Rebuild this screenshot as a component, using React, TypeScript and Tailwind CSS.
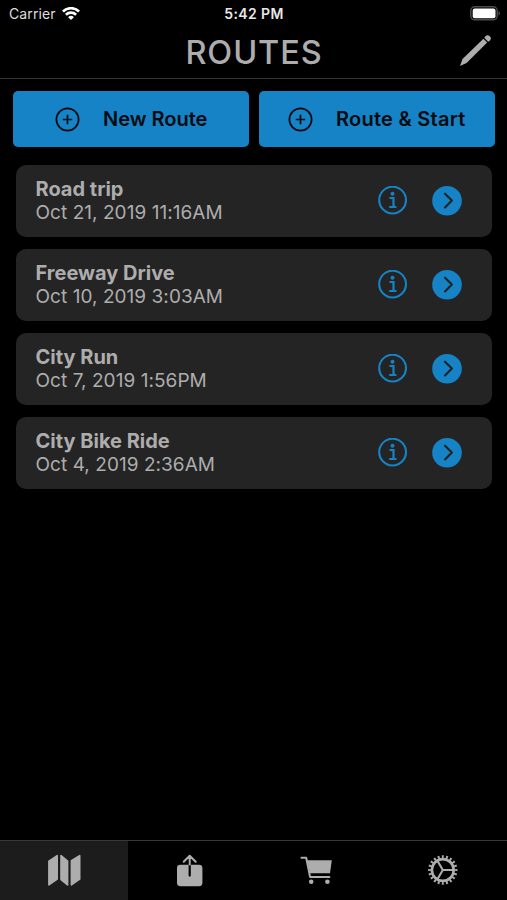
import clsx from "clsx";

const routes = [
  { name: "Road trip", date: "Oct 21, 2019 11:16AM" },
  { name: "Freeway Drive", date: "Oct 10, 2019 3:03AM" },
  { name: "City Run", date: "Oct 7, 2019 1:56PM" },
  { name: "City Bike Ride", date: "Oct 4, 2019 2:36AM" },
];

function WifiIcon() {
  return (
    <svg className="h-[14px] w-[18px]" viewBox="0 0 18 14" fill="none" stroke="#fff" strokeWidth="2.6">
      <path d="M.9 4.5a11.5 11.5 0 0 1 16.2 0" />
      <path d="M3.9 7.7a7.3 7.3 0 0 1 10.2 0" />
      <path d="M9 13.1 6.1 10.2a4.1 4.1 0 0 1 5.8 0z" fill="#fff" stroke="none" />
    </svg>
  );
}

function BatteryIcon() {
  return (
    <svg className="h-[15px] w-[31px]" viewBox="0 0 31 15">
      <rect x=".8" y=".8" width="26.4" height="13" rx="4" fill="none" stroke="#4c4c4c" strokeWidth="1.5" />
      <rect x="2.7" y="2.5" width="22.8" height="9.7" rx="2" fill="#fff" />
      <path d="M28.5 5.2c2 .7 2 3.6 0 4.4z" fill="#4c4c4c" />
    </svg>
  );
}

function PencilIcon() {
  return (
    <svg className="h-8 w-8" viewBox="0 0 32 32" fill="#adadad">
      <path d="M0 31.1 2.5 24.1 23.4 3.7 27.2 7.5 6.6 27.9z" />
      <path d="M24.3 2.8 25.4 1.3a3 3 0 0 1 4.4 4.4L28.1 6.7z" />
    </svg>
  );
}

function PlusCircleIcon() {
  return (
    <svg className="h-[25px] w-[25px] shrink-0" viewBox="0 0 25 25" fill="none" stroke="#050b10" strokeWidth="1.7">
      <circle cx="12.5" cy="12.5" r="11.1" />
      <path d="M12.5 7.8v9.4M7.8 12.5h9.4" />
    </svg>
  );
}

function InfoIcon() {
  return (
    <svg className="h-[30px] w-[30px]" viewBox="0 0 30 30" fill="none" stroke="#1583c5">
      <circle cx="14.6" cy="14.1" r="13.4" strokeWidth="2.1" />
      <circle cx="14.5" cy="7.8" r="2" fill="#1583c5" stroke="none" />
      <path d="M11.5 12h4v9.2M11.2 21h7.2" strokeWidth="2.2" />
    </svg>
  );
}

function GoIcon() {
  return (
    <svg className="h-[30px] w-[30px]" viewBox="0 0 30 30">
      <circle cx="15" cy="14.8" r="14.8" fill="#1583c5" />
      <path d="m13 7.7 6.9 6.9-6.9 6.9" fill="none" stroke="#222" strokeWidth="2.1" strokeLinecap="round" strokeLinejoin="round" />
    </svg>
  );
}

function MapIcon() {
  return (
    <svg className="h-[34px] w-[34px]" viewBox="0 0 34 34" fill="#adadad" stroke="#adadad" strokeWidth="1.6" strokeLinejoin="round">
      <path d="M1.9 7.2 10.2 1.6v23.6L1.9 30.9z" />
      <path d="M14 1.6 20.6 7v23.9L14 25.6z" />
      <path d="M24.4 6.7 32.7 1.6v23.6l-8.3 5.6z" />
    </svg>
  );
}

function ShareIcon() {
  return (
    <svg className="h-[34px] w-[34px]" viewBox="0 0 34 34" fill="none" stroke="#adadad" strokeWidth="2" strokeLinecap="round" strokeLinejoin="round">
      <rect x="3" y="10.8" width="25.4" height="21.4" rx="3.4" fill="#adadad" stroke="none" />
      <path d="M15.7 11v10.6" stroke="#000" strokeWidth="2.2" />
      <path d="M15.7 10.4V1.8M9.7 7.8l6-6 6 6" />
    </svg>
  );
}

function CartIcon() {
  return (
    <svg className="h-[34px] w-[34px]" viewBox="0 0 34 34" fill="none" stroke="#adadad" strokeWidth="2" strokeLinejoin="round">
      <path d="M1.4 3.8h4.8l3.9 19.2h19.3" strokeLinecap="round" />
      <path d="M7.2 6.2h24.6l-1.8 13H10z" fill="#adadad" stroke="none" />
      <circle cx="11.2" cy="27.8" r="2.3" fill="#adadad" stroke="none" />
      <circle cx="27.4" cy="27.8" r="2.3" fill="#adadad" stroke="none" />
    </svg>
  );
}

function GearIcon() {
  return (
    <svg className="h-[34px] w-[34px]" viewBox="0 0 34 34" fill="none" stroke="#adadad">
      <circle cx="15.8" cy="16" r="10.9" strokeWidth="2.6" />
      <circle cx="15.8" cy="16" r="13.2" strokeWidth="3" pathLength="200" strokeDasharray="4.6 5.4" strokeDashoffset="2.3" />
      <path d="M15.8 16h11M15.8 16l-5.5-9.5M15.8 16l-5.5 9.5" strokeWidth="2.1" />
    </svg>
  );
}

const tabs = [
  { name: "Routes", icon: <MapIcon />, active: true },
  { name: "Share", icon: <ShareIcon />, active: false },
  { name: "Store", icon: <CartIcon />, active: false },
  { name: "Settings", icon: <GearIcon />, active: false },
];

export default function App() {
  return (
    <div className="flex h-[900px] w-[507px] flex-col overflow-hidden bg-black font-['Inter',sans-serif] text-[#adadad]">
      <div className="grid h-[27px] shrink-0 grid-cols-3 items-center pr-[6px] pl-[7px] text-white">
        <div className="flex items-center gap-[6px] pl-[2px]">
          <span className="text-[14px] tracking-[0.1px] text-[#dedede]">Carrier</span>
          <WifiIcon />
        </div>
        <span className="text-center text-[14px] font-semibold tracking-[0.4px] text-[#e8e8e8]">5:42 PM</span>
        <div className="flex justify-end">
          <BatteryIcon />
        </div>
      </div>

      <header className="grid h-[52px] shrink-0 grid-cols-[1fr_auto_1fr] items-center border-b border-[#333] pr-[15px] pl-4">
        <h1 className="col-start-2 pt-[2px] text-[32.5px] leading-none font-medium tracking-[0.9px]">ROUTES</h1>
        <button className="flex justify-end pb-[3px]" aria-label="Edit">
          <PencilIcon />
        </button>
      </header>

      <main className="flex-1">
        <div className="grid grid-cols-2 gap-[10px] pt-3 pr-3 pl-[13px]">
          <button className="flex h-[56px] items-center rounded-[5px] bg-[#1583c5] pl-[42px] text-[20px] font-semibold text-[#050b10]">
            <PlusCircleIcon />
            <span className="ml-[23px] whitespace-nowrap">New Route</span>
          </button>
          <button className="flex h-[56px] items-center rounded-[5px] bg-[#1583c5] pl-[29px] text-[20px] font-semibold text-[#050b10]">
            <PlusCircleIcon />
            <span className="ml-[23px] tracking-[0.25px] whitespace-nowrap">Route &amp; Start</span>
          </button>
        </div>

        <ul className="flex flex-col gap-3 pt-[17.5px] pr-[15px] pl-[15.5px]">
          {routes.map((route) => (
            <li key={route.name} className="flex h-[72px] items-center rounded-[10px] bg-[#242424] pr-[30px] pl-5">
              <div className="flex-1 leading-6">
                <p className="text-[20px] font-bold">{route.name}</p>
                <p className="text-[19px] tracking-[0.05px]">{route.date}</p>
              </div>
              <div className="flex gap-6">
                <InfoIcon />
                <GoIcon />
              </div>
            </li>
          ))}
        </ul>
      </main>

      <nav className="grid h-[60px] shrink-0 grid-cols-[128px_1fr_1fr_1fr] border-t border-[#383838]">
        {tabs.map((tab) => (
          <button
            key={tab.name}
            aria-label={tab.name}
            className={clsx("flex items-center justify-center", tab.active && "bg-[#1c1c1c]")}
          >
            {tab.icon}
          </button>
        ))}
      </nav>
    </div>
  );
}
